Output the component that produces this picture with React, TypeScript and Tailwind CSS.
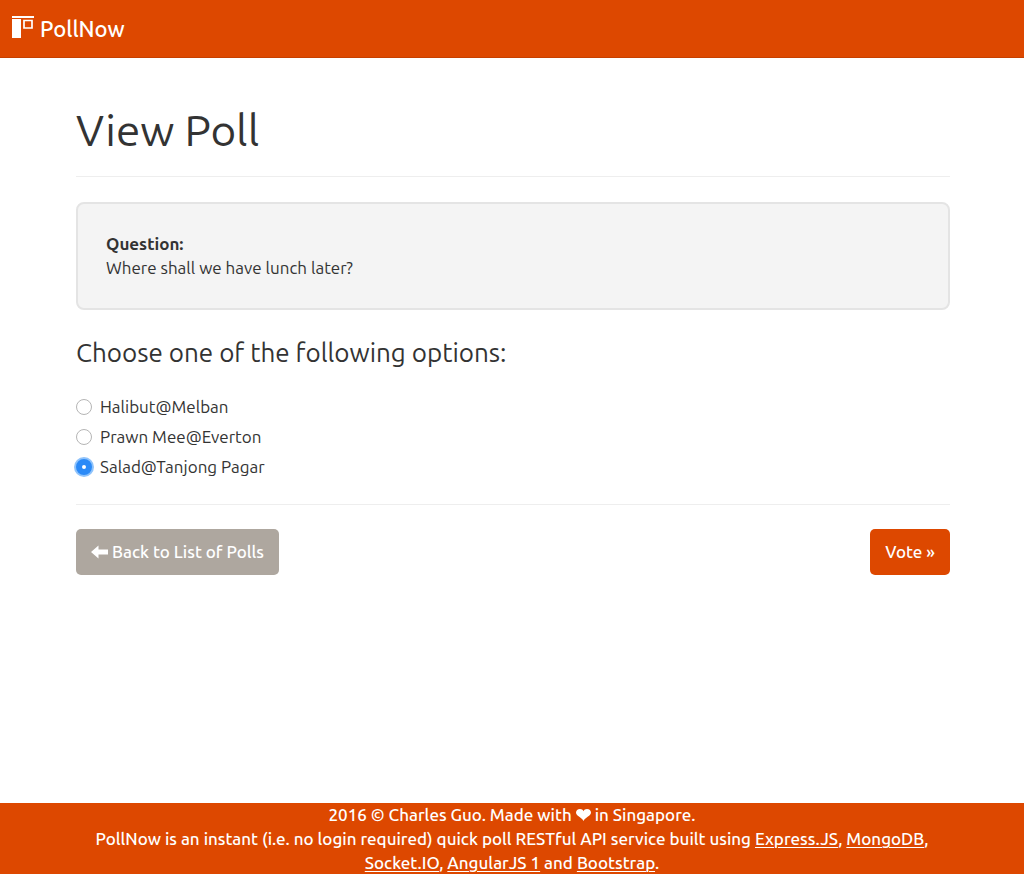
import { useState } from "react";

const options = ["Halibut@Melban", "Prawn Mee@Everton", "Salad@Tanjong Pagar"];

function Logo() {
  return (
    <svg className="mb-1" width="22" height="22" viewBox="0 0 22 22" fill="none" aria-hidden="true">
      <path d="M0 0h22v2H0zM0 3h9v19H0z" fill="#fff" />
      <path d="M12 4.500h8v7.500h-8z" stroke="#fff" strokeWidth="1.700" />
    </svg>
  );
}

function ArrowLeft() {
  return (
    <svg width="17" height="14" viewBox="0 0 17 14" fill="#fff" aria-hidden="true">
      <path d="M7.500 0.500v4H17v5H7.500v4L0 7z" />
    </svg>
  );
}

function Heart() {
  return (
    <svg
      className="inline-block align-baseline"
      width="15"
      height="12"
      viewBox="0 0 15 12"
      fill="#fff"
      role="img"
      aria-label="love"
    >
      <path d="M7.5 2.2C8 0.8 9.4 0 11 0C13.3 0 15 1.5 15 3.6C15 7.2 9.5 8 7.5 12C5.5 8 0 7.2 0 3.6C0 1.5 1.7 0 4 0C5.6 0 7 0.8 7.5 2.2Z" />
    </svg>
  );
}

function FooterLink({ label, href }: { label: string; href: string }) {
  return (
    <a className="underline decoration-1 underline-offset-2" href={href}>
      {label}
    </a>
  );
}

export default function App() {
  const [choice, setChoice] = useState(options[2]);

  return (
    <div className="flex min-h-screen flex-col overflow-hidden bg-white font-['Ubuntu','Noto_Sans',sans-serif] text-[17px] leading-6 text-[#333]">
      <nav className="flex h-[58px] items-center border-b border-[#c64000] bg-[#dd4800] px-3">
        <a href="#" className="flex items-center gap-1.5 text-[22px] font-medium text-white">
          <Logo />
          PollNow
        </a>
      </nav>

      <main className="mx-auto w-full max-w-6xl flex-1 pt-11 pr-[74px] pl-[76px]">
        <h1 className="border-b border-[#eee] pb-[18px] text-[44px] leading-14">View Poll</h1>

        <section className="mt-[25px] rounded-lg border-2 border-[#e4e4e4] bg-[#f4f4f4] px-7 py-7">
          <p className="font-bold">Question:</p>
          <p>Where shall we have lunch later?</p>
        </section>

        <form onSubmit={(event) => event.preventDefault()}>
          <fieldset>
            <legend className="pt-[29px] pb-7 text-[26px] leading-7">
              Choose one of the following options:
            </legend>
            <div className="flex flex-col gap-1.5">
              {options.map((option) => (
                <label key={option} className="flex items-center gap-2">
                  <input
                    type="radio"
                    name="option"
                    value={option}
                    checked={choice === option}
                    onChange={() => setChoice(option)}
                    className="h-4 w-4 appearance-none rounded-full border border-[#b5b5b5] bg-white checked:border-[6px] checked:border-[#2b8af7] checked:ring-2 checked:ring-[#8fc3fb]"
                  />
                  {option}
                </label>
              ))}
            </div>
          </fieldset>

          <div className="mt-[25px] flex justify-between border-t border-[#eee] pt-6">
            <button
              type="button"
              className="flex h-[46px] items-center gap-1 rounded-[5px] bg-[#aea79f] px-[15px] font-medium text-white"
            >
              <ArrowLeft />
              Back to List of Polls
            </button>
            <button
              type="submit"
              className="h-[46px] rounded-[5px] bg-[#dd4800] px-[15px] font-medium text-white"
            >
              Vote »
            </button>
          </div>
        </form>
      </main>

      <footer className="-mb-px bg-[#dd4800] px-[75px] text-center font-medium text-white">
        <p>
          2016 © Charles Guo. Made with <Heart /> in Singapore.
        </p>
        <p>
          PollNow is an instant (i.e. no login required) quick poll RESTful API service built using{" "}
          <FooterLink label="Express.JS" href="#express" />,{" "}
          <FooterLink label="MongoDB" href="#mongodb" />,{" "}
          <FooterLink label="Socket.IO" href="#socketio" />,{" "}
          <FooterLink label="AngularJS 1" href="#angularjs" /> and{" "}
          <FooterLink label="Bootstrap" href="#bootstrap" />.
        </p>
      </footer>
    </div>
  );
}
